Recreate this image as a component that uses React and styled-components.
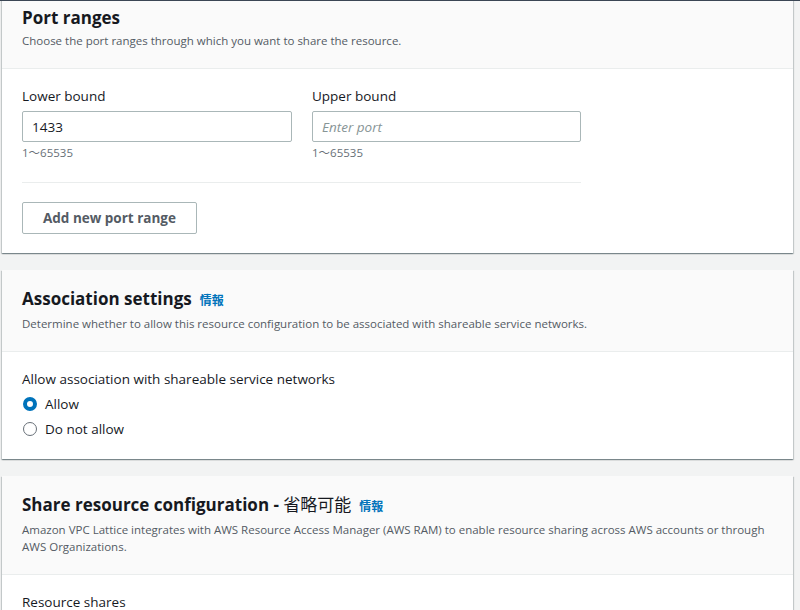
import styled, { createGlobalStyle } from "styled-components";

const GlobalStyle = createGlobalStyle`
  body {
    margin: 0;
    background: #f2f3f3;
    font-family: "Open Sans", "Noto Sans CJK JP", sans-serif;
    color: #16191f;
  }
`;

const Page = styled.div`
  border-top: 1px solid #3b4654;
  height: 609px;
  overflow: hidden;
  padding: 0 7px 0 2px;
`;

const Stack = styled.div`
  display: flex;
  flex-direction: column;
  gap: 17px;
  margin-top: -12px;
`;

const Card = styled.section`
  background: #ffffff;
  box-shadow: 0 1px 1px 0 rgba(0, 28, 36, 0.3), 1px 1px 1px 0 rgba(0, 28, 36, 0.15),
    -1px 1px 1px 0 rgba(0, 28, 36, 0.15);
`;

const Header = styled.div`
  background: #fafafa;
  border-bottom: 1px solid #eaeded;
  padding: 18px 20px 19px;
`;

const Title = styled.h2`
  margin: 0;
  font-size: 17px;
  line-height: 22px;
  font-weight: 700;
  color: #16191f;
  display: flex;
  align-items: baseline;
  gap: 8px;
`;

const Optional = styled.span`
  font-weight: 400;
`;

const Info = styled.a`
  font-size: 12px;
  font-weight: 700;
  color: #0073bb;
  text-decoration: none;
`;

const Desc = styled.p`
  margin: 3px 0 0;
  font-size: 11.5px;
  line-height: 17px;
  color: #545b64;
`;

const Body = styled.div`
  padding: 17px 20px 19px;
`;

const FieldRow = styled.div`
  display: grid;
  grid-template-columns: 270px 269px;
  column-gap: 20px;
`;

const Field = styled.div`
  display: flex;
  flex-direction: column;
`;

const Label = styled.label`
  font-size: 13.5px;
  line-height: 20px;
  color: #16191f;
  margin-bottom: 5px;
`;

const Input = styled.div`
  height: 31px;
  box-sizing: border-box;
  border: 1px solid #aab7b8;
  border-radius: 2px;
  padding: 0 9px;
  display: flex;
  align-items: center;
  font-size: 13.5px;
  color: ${(p) => (p.$placeholder ? "#879596" : "#16191f")};
  font-style: ${(p) => (p.$placeholder ? "italic" : "normal")};
`;

const Hint = styled.div`
  font-size: 11.5px;
  line-height: 16px;
  color: #687078;
  margin-top: 3px;
`;

const Divider = styled.hr`
  width: 559px;
  margin: 21px 0 19px;
  border: 0;
  border-top: 1px solid #eaeded;
`;

const Button = styled.button`
  height: 32px;
  padding: 0 20px;
  background: #fff;
  border: 1px solid #aab7b8;
  border-radius: 2px;
  font-family: inherit;
  font-size: 13.5px;
  font-weight: 700;
  color: #545b64;
`;

const Radios = styled.div`
  display: flex;
  flex-direction: column;
  gap: 5px;
  margin-bottom: 1px;
`;

const RadioRow = styled.div`
  display: flex;
  align-items: center;
  gap: 8px;
  font-size: 13.5px;
  line-height: 20px;
`;

const Dot = styled.span`
  width: 14px;
  height: 14px;
  box-sizing: border-box;
  border-radius: 50%;
  margin-left: 1px;
  border: ${(p) => (p.$on ? "4px solid #0073bb" : "1px solid #687078")};
  background: #fff;
`;

export default function App() {
  return (
    <>
      <GlobalStyle />
      <Page>
        <Stack>
          <Card>
            <Header>
              <Title>Port ranges</Title>
              <Desc>Choose the port ranges through which you want to share the resource.</Desc>
            </Header>
            <Body>
              <FieldRow>
                <Field>
                  <Label>Lower bound</Label>
                  <Input>1433</Input>
                  <Hint>1〜65535</Hint>
                </Field>
                <Field>
                  <Label>Upper bound</Label>
                  <Input $placeholder>Enter port</Input>
                  <Hint>1〜65535</Hint>
                </Field>
              </FieldRow>
              <Divider />
              <Button>Add new port range</Button>
            </Body>
          </Card>

          <Card>
            <Header>
              <Title>
                Association settings <Info>情報</Info>
              </Title>
              <Desc>
                Determine whether to allow this resource configuration to be associated with shareable service networks.
              </Desc>
            </Header>
            <Body>
              <Label as="div">Allow association with shareable service networks</Label>
              <Radios>
                <RadioRow>
                  <Dot $on />
                  Allow
                </RadioRow>
                <RadioRow>
                  <Dot />
                  Do not allow
                </RadioRow>
              </Radios>
            </Body>
          </Card>

          <Card>
            <Header>
              <Title>
                <span>
                  Share resource configuration - <Optional>省略可能</Optional>
                </span>
                <Info>情報</Info>
              </Title>
              <Desc>
                Amazon VPC Lattice integrates with AWS Resource Access Manager (AWS RAM) to enable resource sharing
                across AWS accounts or through AWS Organizations.
              </Desc>
            </Header>
            <Body>
              <Label as="div">Resource shares</Label>
            </Body>
          </Card>
        </Stack>
      </Page>
    </>
  );
}
